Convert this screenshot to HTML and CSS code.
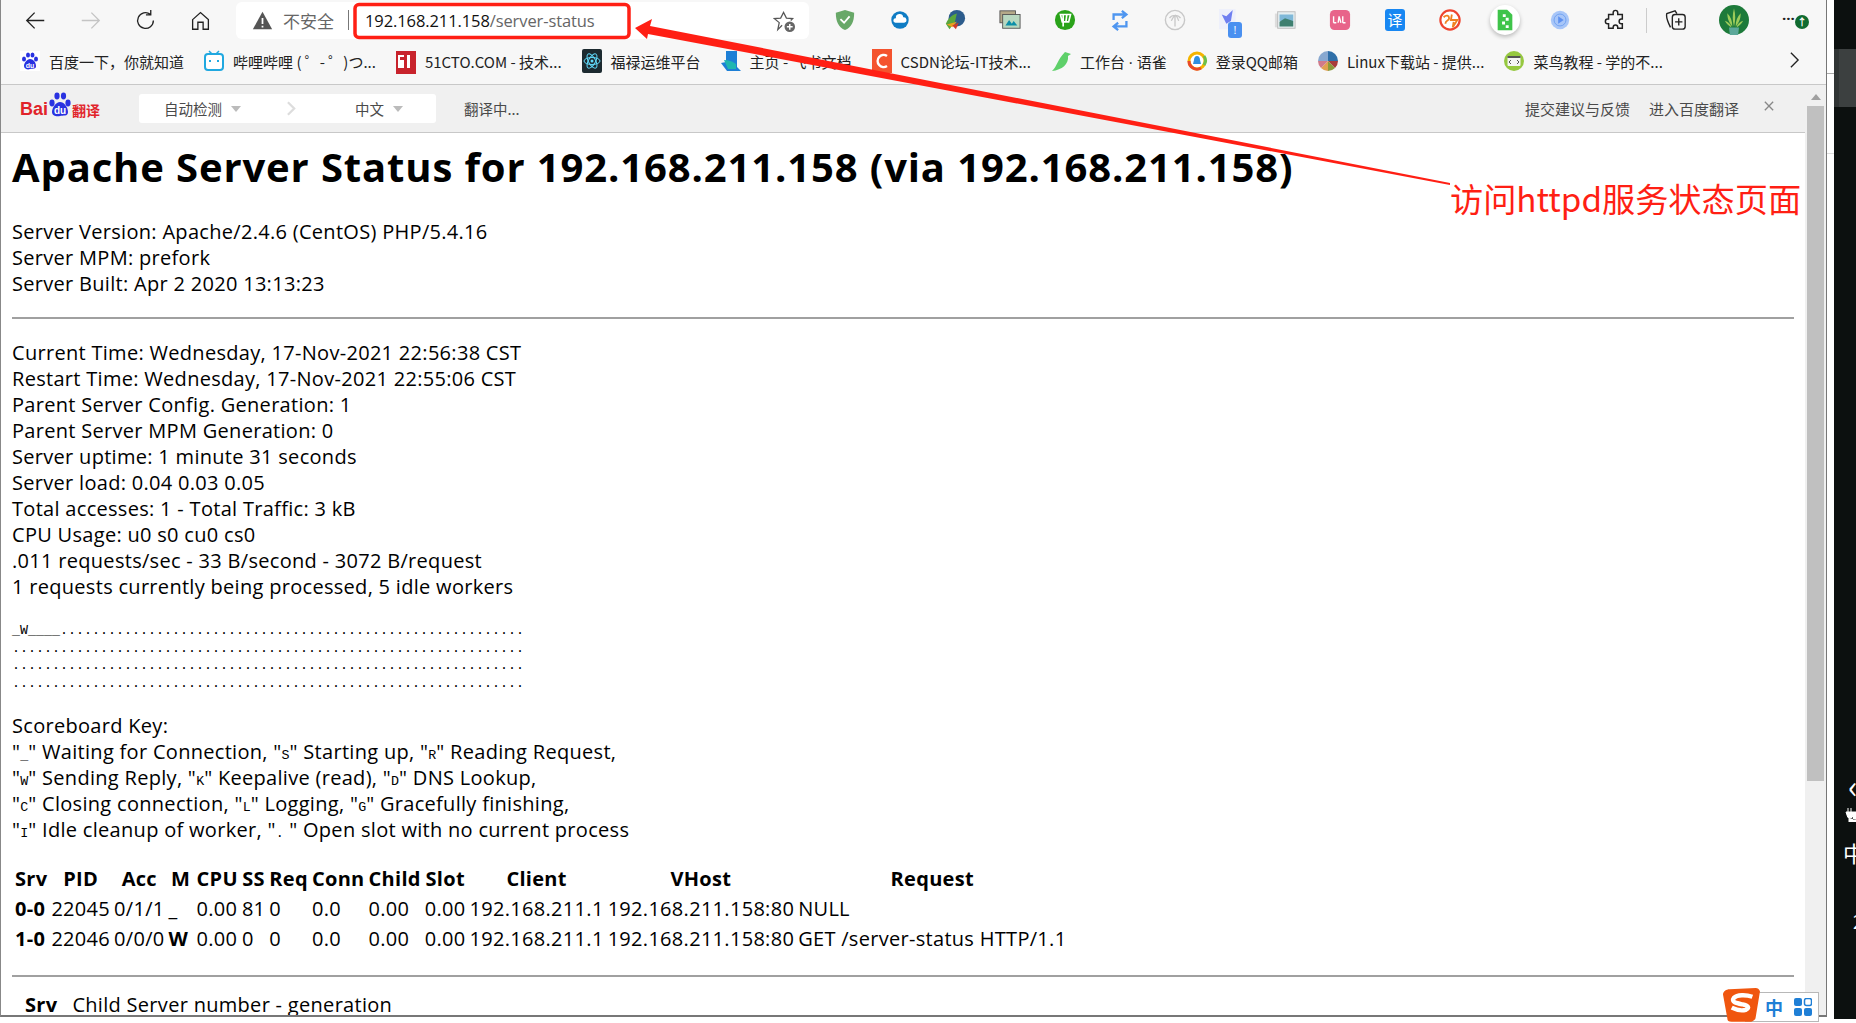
FILE: index.html
```html
<!DOCTYPE html>
<html lang="zh">
<head>
<meta charset="utf-8">
<title>Apache Status</title>
<link rel="stylesheet" href="styles.css">
</head>
<body>
<div class="desktop">
  <div class="window">
    <header class="toolbar">
      <svg class="nav" viewBox="0 0 24 24"><path d="M22 12H2M11 3l-9 9 9 9" fill="none" stroke="#222" stroke-width="1.500"/></svg>
      <svg class="nav" viewBox="0 0 24 24"><path d="M2 12h20M13 3l9 9-9 9" fill="none" stroke="#c4c4c4" stroke-width="1.500"/></svg>
      <svg class="nav" viewBox="0 0 24 24"><path d="M21 12a9 9 0 1 1-3.500-7.100M18 0v5.500h-5.500" fill="none" stroke="#222" stroke-width="1.500"/></svg>
      <svg class="nav" viewBox="0 0 24 24"><path d="M3 11l9-8 9 8v11h-6v-8H9v8H3z" fill="none" stroke="#222" stroke-width="1.500"/></svg>
      <div class="address">
        <svg class="warn" viewBox="0 0 24 24"><path d="M12 2L23 22H1z" fill="#555"/><path d="M12 9v7M12 18v2" stroke="#fff" stroke-width="2"/></svg>
        <span class="insecure">不安全</span>
        <span class="sep"></span>
        <span class="url">192.168.211.158<span class="url-path">/server-status</span></span>
        <svg class="star" viewBox="0 0 24 24"><path d="M9.500 16.500L5 21l1.500-7.300-5-4.200 6.500-.5L11 3l3 6 6.500.5-2 2" fill="none" stroke="#555" stroke-width="1.300"/><circle cx="17.500" cy="18" r="5.500" fill="#666"/><path d="M14.500 18h6M17.500 15v6" stroke="#fff" stroke-width="1.500"/></svg>
      </div>
      <div class="exts">
        <svg class="ext" viewBox="0 0 24 24"><path d="M12 1l10 3c0 10-3 16-10 19C5 20 2 14 2 4z" fill="#68a868"/><path d="M7 11l4 4 6-7" fill="none" stroke="#fff" stroke-width="2"/></svg>
        <svg class="ext" viewBox="0 0 24 24"><circle cx="12" cy="12" r="9.500" fill="#0f7cc4"/><path d="M7 15a2.500 2.500 0 0 1 .5-5 4 4 0 0 1 8-1 3 3 0 0 1 1 6z" fill="#fff"/></svg>
        <svg class="ext" viewBox="0 0 24 24"><circle cx="14" cy="10" r="9" fill="#2c5c8c"/><path d="M2 16C6 8 10 6 14 5l-2 9-6 8z" fill="#5aa63c"/><path d="M3 17l6 3 5-6z" fill="#e8a020"/><path d="M9 18l4 4 3-7z" fill="#d03a2a"/></svg>
        <svg class="ext" viewBox="0 0 24 24"><rect x="1" y="2" width="17" height="13" fill="#b5a988" stroke="#555"/><rect x="4" y="6" width="19" height="15" fill="#b8d8c0" stroke="#555"/><path d="M7 18l4-6 3 4 2-3 4 5z" fill="#0c8fa8"/></svg>
        <svg class="ext" viewBox="0 0 24 24"><circle cx="12" cy="12" r="11" fill="#2aa31a"/><path d="M7 6h11l-2 8H9zM10 6v13M14 6l-1 8" fill="none" stroke="#fff" stroke-width="1.800"/></svg>
        <svg class="ext" viewBox="0 0 24 24"><path d="M5 12V6h12M14 2l5 4-5 4M19 13v6H7M10 15l-5 4 5 4" fill="none" stroke="#4f96f0" stroke-width="2.500"/></svg>
        <svg class="ext" viewBox="0 0 24 24"><circle cx="12" cy="12" r="10.500" fill="none" stroke="#c8c8c8" stroke-width="1.500"/><path d="M12 7v12M6 10c2-3 4-3 6-3s4 0 6 3M8 13c1-3 3-5 4-6s3 3 4 6" fill="none" stroke="#c8c8c8" stroke-width="1.400"/></svg>
        <span class="ext-badged">
          <svg class="ext" viewBox="0 0 24 24"><rect width="18" height="22" fill="#eef0fb"/><path d="M3 6l5 2 7-7-2 12-5 3z" fill="#6f7ff0"/></svg>
          <span class="notice">!</span>
        </span>
        <svg class="ext" viewBox="0 0 24 24"><rect x="1" y="5" width="4" height="15" fill="#ddd"/><rect x="4" y="3" width="19" height="18" fill="#e6eef0" stroke="#bbb"/><path d="M6 6h15v7H6z" fill="#7fb8d8"/><path d="M6 14l6-4 9 3v6H6z" fill="#3f8070"/></svg>
        <svg class="ext" viewBox="0 0 24 24"><rect x="1" y="1" width="22" height="22" rx="5" fill="#e8648a"/><path d="M5 15V8M5 15h3M10 15l1-7 2 7M15 15V8M15 15h3" fill="none" stroke="#fff" stroke-width="1.500"/></svg>
        <span class="ext-yi">译</span>
        <svg class="ext" viewBox="0 0 24 24"><circle cx="12" cy="12" r="10.500" fill="#fff" stroke="#ee4530" stroke-width="2.400"/><path d="M5 9c3-3 6-2 6 1s-4 2-4 6M14 6l-1 6h7l-5 8 1-6" fill="none" stroke="#f08020" stroke-width="2"/></svg>
        <span class="ext-round"><svg viewBox="0 0 24 30" class="ext-doc"><path d="M2 1h13l7 7v21H2z" fill="#3fc44a"/><path d="M9 7h4v4H9zM13 12h4v4h-4zM8 17h4v4H8zM13 22h4v4h-4z" fill="#fff"/></svg></span>
        <svg class="ext" viewBox="0 0 24 24"><circle cx="12" cy="12" r="10" fill="#a8c6f8"/><circle cx="12" cy="12" r="6.500" fill="none" stroke="#6fa0f0"/><path d="M10 8l6 4-6 4z" fill="#5d90f0"/></svg>
      </div>
      <svg class="puzzle" viewBox="0 0 24 24"><path d="M10 4a2.500 2.500 0 0 1 5 0v2h5v5h-1a2.500 2.500 0 0 0 0 5h1v5h-5v-1a2.500 2.500 0 0 0-5 0v1H5v-5H4a2.500 2.500 0 0 1 0-5h1V6h5z" fill="none" stroke="#222" stroke-width="1.600"/></svg>
      <span class="vsep"></span>
      <svg class="collections" viewBox="0 0 24 24"><path d="M6 20C3 14 1 8 2 5l9-3 2 3" fill="none" stroke="#222" stroke-width="1.500"/><rect x="8" y="6" width="14" height="16" rx="3" fill="#f7f7f7" stroke="#222" stroke-width="1.500"/><path d="M15 10v8M11 14h8" stroke="#222" stroke-width="1.500"/></svg>
      <svg class="avatar" viewBox="0 0 36 36"><circle cx="18" cy="18" r="18" fill="#1d7a3a"/><path d="M18 26C16 18 16 12 18 4c2 8 2 14 0 22zM16 26C12 21 10 17 10 10c4 4 6 9 6 16zM20 26c4-5 6-9 6-16-4 4-6 9-6 16zM15 27c-3-2-6-4-8-8 4 1 7 4 8 8zM21 27c3-2 6-4 8-8-4 1-7 4-8 8z" fill="#9ccb5a"/><path d="M12 27h12l-1 9H13z" fill="#5ca89a"/></svg>
      <span class="more">···<span class="update">↑</span></span>
    </header>
    <nav class="bookmarks">
      <span class="bm"><svg class="bm-ic" viewBox="0 0 20 20"><rect width="20" height="20" fill="#fff"/><g fill="#2932e1"><ellipse cx="4" cy="8" rx="2" ry="2.600"/><ellipse cx="8" cy="4" rx="2" ry="2.600"/><ellipse cx="12.500" cy="4" rx="2" ry="2.600"/><ellipse cx="16" cy="8" rx="2" ry="2.600"/><path d="M10 8c-3 0-6 4-6 7s4 4 6 3 6 1 6-3-3-7-6-7z"/></g><text x="10" y="16.500" class="du-small">du</text></svg>百度一下，你就知道</span>
      <span class="bm"><svg class="bm-ic" viewBox="0 0 20 20"><path d="M5 0l3 3M15 0l-3 3" stroke="#20a8e0" stroke-width="1.500"/><rect x="1" y="3" width="18" height="16" rx="3" fill="#fff" stroke="#20a8e0" stroke-width="2"/><path d="M6 9v2M14 9v2" stroke="#20a8e0" stroke-width="2"/></svg>哔哩哔哩 ( ゜- ゜)つ...</span>
      <span class="bm"><svg class="bm-ic" viewBox="0 0 20 20"><rect width="20" height="23" fill="#c8232c"/><path d="M2 4h6v2H4v3h4v8H2M11 4h3v13h-3" fill="#fff"/></svg>51CTO.COM - 技术...</span>
      <span class="bm"><svg class="bm-ic" viewBox="0 0 20 20"><rect width="20" height="24" y="-2" rx="2" fill="#1c2a30"/><g fill="none" stroke="#61dafb"><ellipse cx="10" cy="10" rx="8" ry="3.500"/><ellipse cx="10" cy="10" rx="8" ry="3.500" transform="rotate(60 10 10)"/><ellipse cx="10" cy="10" rx="8" ry="3.500" transform="rotate(120 10 10)"/></g><circle cx="10" cy="10" r="1.500" fill="#61dafb"/></svg>福禄运维平台</span>
      <span class="bm"><svg class="bm-ic" viewBox="0 0 20 20"><path d="M5 0h11v16l4 4H6l-6-8 5-1z" fill="#1d7fd6"/><path d="M3 9c5 0 9 2 12 4v5H7z" fill="#1fb6b0"/></svg>主页 - 飞书文档</span>
      <span class="bm"><svg class="bm-ic" viewBox="0 0 20 20"><rect width="20" height="24" y="-2" fill="#f4532e"/><path d="M15 5a6 6 0 1 0 0 10" fill="none" stroke="#fff" stroke-width="2.500"/></svg>CSDN论坛-IT技术...</span>
      <span class="bm"><svg class="bm-ic" viewBox="0 0 20 20"><path d="M14 1l6 2-3 2c1 8-6 14-16 15C6 16 6 9 14 1z" fill="#5fd06a"/></svg><span>工作台<span class="latin-dot"> · </span>语雀</span></span>
      <span class="bm"><svg class="bm-ic" viewBox="0 0 20 20"><circle cx="10" cy="10" r="8" fill="#fff" stroke="#f4b400" stroke-width="3"/><path d="M2 10a8 8 0 0 0 12 7" fill="none" stroke="#e8482a" stroke-width="3"/><path d="M17 5a8 8 0 0 1 0 9" fill="none" stroke="#6cc04a" stroke-width="3"/><path d="M10 5c-2 0-3 2-3 4l-1 4 8 0-1-4c0-2-1-4-3-4z" fill="#2f8fe0"/></svg>登录QQ邮箱</span>
      <span class="bm"><svg class="bm-ic" viewBox="0 0 20 20"><path d="M10 10V0a10 10 0 0 1 10 10z" fill="#2f6fa8"/><path d="M10 10h10a10 10 0 0 1-3 7z" fill="#a83c3c"/><path d="M10 10l7 7a10 10 0 0 1-7 3z" fill="#8a9a3c"/><path d="M10 10v10a10 10 0 0 1-7-3z" fill="#e0a050"/><path d="M10 10l-7 7a10 10 0 0 1-3-7z" fill="#d07a8a"/><path d="M10 10H0a10 10 0 0 1 10-10z" fill="#88a8d0"/></svg>Linux下载站 - 提供...</span>
      <span class="bm"><svg class="bm-ic" viewBox="0 0 20 20"><circle cx="10" cy="10" r="10" fill="#96c840"/><rect x="3.500" y="5" width="13" height="10" rx="1" fill="#f4f4f4"/><rect x="3.500" y="5" width="13" height="2" fill="#555"/><path d="M7 9l-2 2 2 2M13 9l2 2-2 2" fill="none" stroke="#555"/></svg>菜鸟教程 - 学的不...</span>
      <svg class="bm-more" viewBox="0 0 12 20"><path d="M2 2l8 8-8 8" fill="none" stroke="#222" stroke-width="1.500"/></svg>
    </nav>
    <div class="frame">
      <div class="page">
        <div class="transbar">
          <span class="baidu-logo"><span class="logo-bai">Bai</span><svg class="logo-paw" viewBox="0 0 24 26"><g fill="#2932e1"><ellipse cx="4" cy="11" rx="2.600" ry="3.400"/><ellipse cx="9" cy="4" rx="2.600" ry="3.400"/><ellipse cx="15.500" cy="4" rx="2.600" ry="3.400"/><ellipse cx="20" cy="11" rx="2.600" ry="3.400"/><path d="M12 10c-4 0-8 6-8 10s5 5 8 4 8 1 8-4-4-10-8-10z"/></g><text x="12" y="22" class="du-logo">du</text></svg><span class="logo-fy">翻译</span></span>
          <div class="lang-box">
            <span class="lang-auto">自动检测<i class="caret"></i></span>
            <svg class="lang-arrow" viewBox="0 0 10 16"><path d="M1 1l7 7-7 7" fill="none" stroke="#ddd" stroke-width="2.500"/></svg>
            <span class="lang-zh">中文<i class="caret"></i></span>
          </div>
          <span class="trans-status">翻译中...</span>
          <span class="trans-link first">提交建议与反馈</span>
          <span class="trans-link second">进入百度翻译</span>
          <svg class="trans-close" viewBox="0 0 12 12"><path d="M1 1l10 10M11 1L1 11" stroke="#888" stroke-width="1.600"/></svg>
        </div>
        <main class="content">
          <h1>Apache Server Status for 192.168.211.158 (via 192.168.211.158)</h1>
          <dl class="block">
            <dt>Server Version: Apache/2.4.6 (CentOS) PHP/5.4.16</dt>
            <dt>Server MPM: prefork</dt>
            <dt>Server Built: Apr 2 2020 13:13:23</dt>
          </dl>
          <hr>
          <dl class="block">
            <dt>Current Time: Wednesday, 17-Nov-2021 22:56:38 CST</dt>
            <dt>Restart Time: Wednesday, 17-Nov-2021 22:55:06 CST</dt>
            <dt>Parent Server Config. Generation: 1</dt>
            <dt>Parent Server MPM Generation: 0</dt>
            <dt>Server uptime: 1 minute 31 seconds</dt>
            <dt>Server load: 0.04 0.03 0.05</dt>
            <dt>Total accesses: 1 - Total Traffic: 3 kB</dt>
            <dt>CPU Usage: u0 s0 cu0 cs0</dt>
            <dt>.011 requests/sec - 33 B/second - 3072 B/request</dt>
            <dt>1 requests currently being processed, 5 idle workers</dt>
          </dl>
          <pre class="scoreboard">_W____..........................................................
................................................................
................................................................
................................................................</pre>
          <p class="key">Scoreboard Key:<br>
"<tt>_</tt>" Waiting for Connection, "<tt>S</tt>" Starting up, "<tt>R</tt>" Reading Request,<br>
"<tt>W</tt>" Sending Reply, "<tt>K</tt>" Keepalive (read), "<tt>D</tt>" DNS Lookup,<br>
"<tt>C</tt>" Closing connection, "<tt>L</tt>" Logging, "<tt>G</tt>" Gracefully finishing,<br>
"<tt>I</tt>" Idle cleanup of worker, "<tt>.</tt> " Open slot with no current process</p>
          <table class="workers">
            <tr><th>Srv</th><th>PID</th><th>Acc</th><th>M</th><th>CPU</th><th>SS</th><th>Req</th><th>Conn</th><th>Child</th><th>Slot</th><th>Client</th><th>VHost</th><th>Request</th></tr>
            <tr><td><b>0-0</b></td><td>22045</td><td>0/1/1</td><td>_</td><td>0.00</td><td>81</td><td>0</td><td>0.0</td><td>0.00</td><td>0.00</td><td>192.168.211.1</td><td>192.168.211.158:80</td><td>NULL</td></tr>
            <tr><td><b>1-0</b></td><td>22046</td><td>0/0/0</td><td><b>W</b></td><td>0.00</td><td>0</td><td>0</td><td>0.0</td><td>0.00</td><td>0.00</td><td>192.168.211.1</td><td>192.168.211.158:80</td><td>GET /server-status HTTP/1.1</td></tr>
          </table>
          <hr class="hr-lower">
          <p class="legend"><b>Srv</b><span>Child Server number - generation</span></p>
        </main>
      </div>
      <div class="scrollbar">
        <svg class="sb-up" viewBox="0 0 10 6"><path d="M5 0l5 6H0z" fill="#a0a0a0"/></svg>
        <div class="sb-thumb"></div>
        <svg class="sb-down" viewBox="0 0 10 6"><path d="M5 6l5-6H0z" fill="#666"/></svg>
      </div>
    </div>
  </div>
  <div class="gutter"><i class="gutter-line first"></i><i class="gutter-line second"></i></div>
  <aside class="side">
    <div class="side-band"><i class="side-band-edge"></i></div>
    <span class="tray tray-chev">‹</span>
    <svg class="tray-plug" viewBox="0 0 22 14"><path d="M3 0v4M6 0v4M1 4h7v3a3 3 0 0 1-6 0zM4 10v4h18M8 4h14v8H8" fill="#fff" stroke="#fff"/></svg>
    <span class="tray tray-zh">中</span>
    <span class="tray tray-num">2</span>
  </aside>
  <div class="ime">
    <svg class="ime-logo" viewBox="0 0 34 32"><path d="M6 1l24-1c2 0 3 1 4 3l-4 24c0 2-2 3-4 4H8c-3 0-4-1-4-3L0 6c0-3 3-5 6-5z" fill="#f0560f"/><path d="M27 8c-6-2-14-2-17 1-3 4 3 5 8 6 5 1 7 3 3 5-4 1-9 0-13-2" fill="none" stroke="#fff" stroke-width="4"/></svg>
    <span class="ime-zh">中</span>
    <svg class="ime-grid" viewBox="0 0 18 18"><rect width="8" height="8" rx="2" fill="#1f7fd6"/><rect x="10.500" y=".5" width="7" height="7" rx="2" fill="none" stroke="#1f7fd6" stroke-width="1.500"/><rect y="10" width="8" height="8" rx="2" fill="#1f7fd6"/><rect x="10" y="10" width="8" height="8" rx="2" fill="#1f7fd6"/></svg>
  </div>
  <svg class="annot" viewBox="0 0 1856 1023">
    <rect x="355" y="4.500" width="274" height="33" rx="4" fill="none" stroke="#ff1f14" stroke-width="3.500"/>
    <path d="M635 28L652 19l-2 7L1450 183v2L648 34l-1 5z" fill="#ff1f14"/>
  </svg>
  <span class="annot-text">访问httpd服务状态页面</span>
</div>
</body>
</html>
```
FILE: styles.css
```css
* { box-sizing: border-box; }
html, body { margin: 0; height: 100%; overflow: hidden; }
body { background: #fff; font-family: "Open Sans", "Noto Sans CJK SC", sans-serif; color: #000; }
.desktop { position: relative; width: 1856px; height: 1023px; display: flex; align-items: flex-start; background: #fff; overflow: hidden; }
.window { width: 1827px; height: 1017px; flex: none; display: flex; flex-direction: column; border-right: 1px solid #777; border-left: 1px solid #888; border-bottom: 2px solid #777; background: #fff; }
.toolbar { height: 40px; flex: none; display: flex; align-items: center; background: #f7f7f7; padding-left: 24px; }
.nav { width: 21px; height: 21px; margin-right: 34px; flex: none; }
.nav:nth-child(4) { margin-right: 25px; }
.address { width: 573px; height: 37px; flex: none; background: #fff; border-radius: 6px; display: flex; align-items: center; position: relative; }
.warn { width: 21px; height: 21px; margin-left: 16px; flex: none; }
.insecure { margin-left: 10px; font-size: 17px; color: #666; font-family: "Noto Sans CJK SC", sans-serif; }
.sep { width: 1px; height: 20px; background: #777; margin-left: 14px; }
.url { margin-left: 16px; font-size: 16.500px; color: #111; font-family: "Open Sans", sans-serif; letter-spacing: -0.1px; }
.url-path { color: #666; }
.star { position: absolute; right: 13px; top: 7px; width: 23px; height: 24px; }
.exts { display: flex; align-items: center; margin-left: 25px; gap: 33px; }
.ext { width: 22px; height: 22px; flex: none; display: block; }
.ext-badged { position: relative; display: block; width: 22px; height: 22px; }
.notice { position: absolute; right: -1px; bottom: -7px; width: 14px; height: 16px; border-radius: 3px; background: #4a90f0; color: #fff; font-size: 11px; line-height: 16px; text-align: center; }
.ext-yi { width: 20px; height: 22px; margin: 0 1px; border-radius: 3px; background: #1887f2; color: #fff; font-size: 15px; line-height: 22px; text-align: center; font-family: "Noto Sans CJK SC", sans-serif; }
.ext-round { width: 30px; height: 30px; border-radius: 50%; background: #fff; box-shadow: 0 2px 4px rgba(0,0,0,.25); display: flex; align-items: center; justify-content: center; margin: 0 -4px; }
.ext-doc { width: 18px; height: 22px; }
.puzzle { width: 22px; height: 24px; margin-left: 33px; flex: none; }
.vsep { width: 1px; height: 25px; background: #ccc; margin-left: 20px; flex: none; }
.collections { width: 22px; height: 24px; margin-left: 18px; flex: none; }
.avatar { width: 30px; height: 30px; margin-left: 32px; flex: none; }
.more { position: relative; margin-left: 33px; font-size: 15px; font-weight: 700; color: #222; line-height: 1; margin-top: -4px; white-space: nowrap; }
.update { position: absolute; left: 13px; top: 4px; width: 14px; height: 14px; border-radius: 50%; background: #106b30; color: #fff; font-size: 10px; line-height: 14px; text-align: center; font-weight: 700; }
.bookmarks { height: 45px; flex: none; display: flex; align-items: center; background: #f7f7f7; border-bottom: 1px solid #c8c8c8; padding: 0 0 2px 19px; position: relative; font-size: 15px; color: #222; font-family: "Noto Sans CJK SC", sans-serif; }
.bm { display: flex; align-items: center; margin-right: 20px; white-space: nowrap; }
.bm-ic { width: 20px; height: 20px; margin-right: 9px; flex: none; overflow: visible; }
.latin-dot { font-family: "Open Sans", sans-serif; white-space: pre; }
.bm-more { position: absolute; left: 1788px; top: 11px; width: 11px; height: 18px; }
.du-small { font: 700 7px "Liberation Sans", sans-serif; fill: #fff; text-anchor: middle; }
.du-logo { font: 700 10px "Liberation Sans", sans-serif; fill: #fff; text-anchor: middle; }
.frame { flex: 1; min-height: 0; display: flex; }
.page { flex: 1; min-width: 0; display: flex; flex-direction: column; }
.transbar { height: 48px; flex: none; display: flex; align-items: center; background: #f0f0f0; border-bottom: 1px solid #c8c8c8; font-family: "Noto Sans CJK SC", sans-serif; font-size: 14.500px; color: #4a4a4a; position: relative; }
.baidu-logo { display: flex; align-items: center; margin-left: 19px; width: 119px; flex: none; }
.logo-bai { font-family: "Liberation Sans", sans-serif; font-weight: 700; font-size: 18px; color: #e1242a; margin-top: 2px; }
.logo-paw { width: 24px; height: 26px; margin: -8px 0 0 0; flex: none; }
.logo-fy { font-size: 14px; font-weight: 700; color: #e1242a; margin-top: 3px; }
.lang-box { width: 297px; height: 29px; background: #fff; border-radius: 3px; display: flex; align-items: center; position: relative; flex: none; }
.lang-auto { margin-left: 25px; display: flex; align-items: center; }
.lang-zh { position: absolute; left: 216px; display: flex; align-items: center; }
.lang-arrow { position: absolute; left: 148px; top: 7px; width: 9px; height: 15px; }
.caret { display: inline-block; margin-left: 9px; border: 5px solid transparent; border-top: 6px solid #bbb; border-bottom: 0; }
.trans-status { margin-left: 28px; }
.trans-link { font-size: 15px; white-space: nowrap; }
.trans-link.first { margin-left: auto; }
.trans-link.second { margin-left: 19px; }
.trans-close { width: 10px; height: 10px; margin: -6px 31px 0 25px; flex: none; }
.content { flex: 1; min-height: 0; padding: 0 11px 0 11px; overflow: hidden; background: #fff; font-size: 20px; line-height: 26px; letter-spacing: 0.3px; color: #000; }
h1 { font-size: 40px; line-height: 54px; font-weight: 700; margin: 7px 0 25px; white-space: nowrap; letter-spacing: 0.87px; }
.block { margin: 0; }
.block dt { white-space: nowrap; }
hr { border: 0; height: 2px; background: #a0a0a0; margin: 20px 0 21px; }
.scoreboard { margin: 22px 0 21px; font-family: "Liberation Mono", monospace; font-size: 13.330px; letter-spacing: 0; line-height: 17.500px; }
.key { margin: 0 0 19.500px; white-space: nowrap; }
tt { font-family: "Liberation Mono", monospace; font-size: 13.330px; line-height: 0; letter-spacing: 0; }
.workers { border-collapse: separate; border-spacing: 2.500px 2.500px; margin: 0; }
.workers th { padding: 1px; font-weight: 700; text-align: center; white-space: nowrap; }
.workers th:nth-child(4) { min-width: 26px; }
.workers td { padding: 1px; text-align: left; white-space: nowrap; }
.hr-lower { margin: 20px 0 15px; }
.legend { margin: 0; padding-left: 13px; white-space: nowrap; display: flex; gap: 15px; }
.scrollbar { width: 21px; flex: none; background: #f0f0f0; position: relative; }
.sb-up { position: absolute; left: 6px; top: 9px; width: 10px; height: 6px; }
.sb-thumb { position: absolute; left: 2px; right: 2px; top: 21px; height: 675px; background: #c0c0c0; }
.sb-down { position: absolute; left: 6px; bottom: 8px; width: 8px; height: 5px; }
.gutter { width: 7px; flex: none; height: 160px; padding-top: 73px; }
.gutter-line { display: block; height: 1px; background: #aaa; }
.gutter-line.second { margin-top: 79px; background: #ddd; }
.side { flex: 1; background: #0c100f; height: 1019px; position: relative; color: #fff; overflow: hidden; }
.side-band { position: absolute; left: 0; right: 0; top: 49px; height: 58px; background: #3c4040; }
.side-band-edge { display: block; width: 5px; height: 100%; background: #303434; }
.tray { position: absolute; font-size: 22px; line-height: 1; color: #fff; white-space: nowrap; font-family: "Noto Sans CJK SC", sans-serif; }
.tray-chev { left: 14px; top: 769px; font-size: 32px; }
.tray-plug { position: absolute; left: 11px; top: 808px; width: 22px; height: 14px; }
.tray-zh { left: 9px; top: 841px; }
.tray-num { top: 912px; font-size: 18px; left: 19px; }
.ime { position: absolute; left: 1745px; top: 992px; width: 74px; height: 30px; background: #fff; border: 1px solid #b8b8b8; }
.ime-logo { position: absolute; left: -23px; top: -5px; width: 37px; height: 35px; }
.ime-zh { position: absolute; left: 19px; top: 4px; color: #1f7fd6; font-size: 18px; line-height: 20px; font-weight: 700; font-family: "Noto Sans CJK SC", sans-serif; }
.ime-grid { position: absolute; left: 48px; top: 5px; width: 18px; height: 18px; }
.annot { position: absolute; left: 0; top: 0; width: 1856px; height: 1023px; pointer-events: none; }
.annot-text { position: absolute; left: 1450px; top: 175px; font-size: 33.200px; line-height: 46px; color: #ff1f14; white-space: nowrap; font-family: "Noto Sans CJK SC", sans-serif; }
```
